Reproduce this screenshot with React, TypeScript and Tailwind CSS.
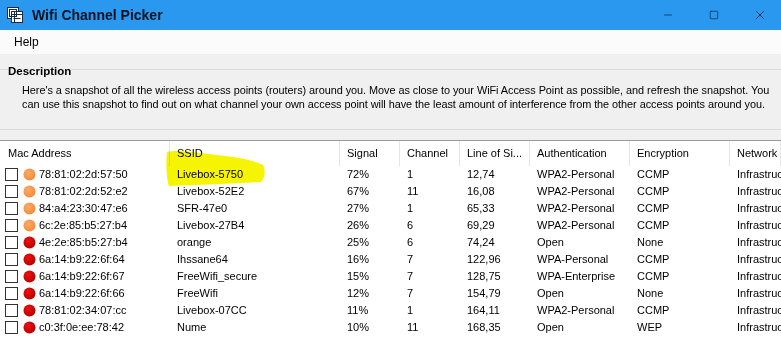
import { Minus, Square, X } from "lucide-react";

type Row = {
  mac: string;
  ssid: string;
  signal: string;
  channel: string;
  los: string;
  auth: string;
  enc: string;
  strong: boolean;
};

const rows: Row[] = [
  { mac: "78:81:02:2d:57:50", ssid: "Livebox-5750", signal: "72%", channel: "1", los: "12,74", auth: "WPA2-Personal", enc: "CCMP", strong: true },
  { mac: "78:81:02:2d:52:e2", ssid: "Livebox-52E2", signal: "67%", channel: "11", los: "16,08", auth: "WPA2-Personal", enc: "CCMP", strong: true },
  { mac: "84:a4:23:30:47:e6", ssid: "SFR-47e0", signal: "27%", channel: "1", los: "65,33", auth: "WPA2-Personal", enc: "CCMP", strong: true },
  { mac: "6c:2e:85:b5:27:b4", ssid: "Livebox-27B4", signal: "26%", channel: "6", los: "69,29", auth: "WPA2-Personal", enc: "CCMP", strong: true },
  { mac: "4e:2e:85:b5:27:b4", ssid: "orange", signal: "25%", channel: "6", los: "74,24", auth: "Open", enc: "None", strong: false },
  { mac: "6a:14:b9:22:6f:64", ssid: "Ihssane64", signal: "16%", channel: "7", los: "122,96", auth: "WPA-Personal", enc: "CCMP", strong: false },
  { mac: "6a:14:b9:22:6f:67", ssid: "FreeWifi_secure", signal: "15%", channel: "7", los: "128,75", auth: "WPA-Enterprise", enc: "CCMP", strong: false },
  { mac: "6a:14:b9:22:6f:66", ssid: "FreeWifi", signal: "12%", channel: "7", los: "154,79", auth: "Open", enc: "None", strong: false },
  { mac: "78:81:02:34:07:cc", ssid: "Livebox-07CC", signal: "11%", channel: "1", los: "164,11", auth: "WPA2-Personal", enc: "CCMP", strong: false },
  { mac: "c0:3f:0e:ee:78:42", ssid: "Nume", signal: "10%", channel: "11", los: "168,35", auth: "Open", enc: "WEP", strong: false },
];

const cols = "grid grid-cols-[170px_170px_60px_60px_70px_100px_100px_1fr]";

const Dot = ({ strong }: { strong: boolean }) => (
  <svg width="13" height="13" viewBox="0 0 13 13" className="shrink-0">
    <defs>
      <radialGradient id="dotOrange" cx="0.4" cy="0.35" r="0.7">
        <stop offset="0" stopColor="#fbab66" />
        <stop offset="1" stopColor="#f08a3a" />
      </radialGradient>
      <radialGradient id="dotRed" cx="0.4" cy="0.35" r="0.7">
        <stop offset="0" stopColor="#f01010" />
        <stop offset="1" stopColor="#b00000" />
      </radialGradient>
    </defs>
    <circle cx="6.5" cy="6.5" r="6" fill={strong ? "url(#dotOrange)" : "url(#dotRed)"} />
  </svg>
);

const AppIcon = () => (
  <svg width="16" height="16" viewBox="0 0 16 16" className="shrink-0">
    <rect x="0.5" y="0.5" width="11" height="11" fill="#fff" stroke="#1b2a44" />
    <rect x="4.5" y="4.5" width="11" height="11" fill="#fff" stroke="#1b2a44" />
    <rect x="2.5" y="2.5" width="7" height="7" fill="none" stroke="#1b2a44" />
    <line x1="4.5" y1="7.5" x2="15.5" y2="7.5" stroke="#1b2a44" />
    <line x1="7.5" y1="4.5" x2="7.5" y2="15.5" stroke="#1b2a44" />
    <line x1="6.5" y1="11.5" x2="13.5" y2="11.5" stroke="#1b2a44" />
  </svg>
);

export default function App() {
  return (
    <div className="w-[781px] h-[364px] overflow-hidden bg-[#f0f0f0] text-black font-['Liberation_Sans',Arial,sans-serif] text-[11px]">
      {/* title bar */}
      <div className="h-[30px] bg-[#2a98ee] flex items-center">
        <div className="pl-[7px] pr-[9px]">
          <AppIcon />
        </div>
        <span className="font-bold text-[14px] text-[#0b1320]">Wifi Channel Picker</span>
        <div className="ml-auto flex -mr-[2px] h-full text-[#0b1320]">
          <div className="w-[46px] flex items-center justify-center">
            <Minus size={12} strokeWidth={1.2} />
          </div>
          <div className="w-[46px] flex items-center justify-center">
            <Square size={10} strokeWidth={1.4} />
          </div>
          <div className="w-[46px] flex items-center justify-center">
            <X size={14} strokeWidth={1.2} />
          </div>
        </div>
      </div>

      {/* menu */}
      <div className="h-[24px] bg-[#fbfbfb] flex items-center px-[14px] text-[12px]">Help</div>

      {/* description group */}
      <div className="h-[86px] pt-[9px] pb-[10px]">
        <div className="relative h-full border-b border-[#dadada]">
          <div className="absolute left-0 right-0 top-[6px] border-t border-[#dadada]" />
          <span className="relative ml-[8px] bg-[#f0f0f0] font-bold text-[11.5px] leading-[14px]">Description</span>
          <p className="pl-[22px] pr-0 mt-[3px] leading-[14px] text-[10.9px] tracking-[-0.05px]">
            Here's a snapshot of all the wireless access points (routers) around you. Move as close to your WiFi Access Point as possible, and refresh the snapshot. You can use this snapshot to find out on what channel your own access point will have the least amount of interference from the other access points around you.
          </p>
        </div>
      </div>

      {/* list view */}
      <div className="relative h-[224px] bg-white border-t border-[#9a9a9a]">
        <div className={`${cols} h-[25px] items-stretch`}>
          {["Mac Address", "SSID", "Signal", "Channel", "Line of Si...", "Authentication", "Encryption", "Network Type"].map((h, i) => (
            <div
              key={h}
              className={`flex items-center whitespace-nowrap overflow-hidden border-r border-[#e5e5e5] ${i === 0 ? "pl-[8px]" : "pl-[7px]"}`}
            >
              {h}
            </div>
          ))}
        </div>

        <svg className="absolute left-[165px] top-[8px] mix-blend-multiply pointer-events-none" width="105" height="40" viewBox="0 0 105 40">
          <path
            d="M2 3 C 15 0, 40 5, 60 7 C 80 9, 92 13, 98 16 C 101 22, 100 29, 96 33 L 55 35 L 4 37 C 1 28, 1 12, 2 3 Z"
            fill="#f6f400"
          />
        </svg>

        {rows.map((r) => (
          <div key={r.mac} className={`${cols} h-[17px] items-center whitespace-nowrap`}>
            <div className="flex items-center pl-[5px]">
              <div className="w-[13px] h-[13px] border border-[#333] bg-white shrink-0" />
              <div className="ml-[5px]">
                <Dot strong={r.strong} />
              </div>
              <span className="ml-[3px]">{r.mac}</span>
            </div>
            <div className="pl-[7px] relative">{r.ssid}</div>
            <div className="pl-[7px]">{r.signal}</div>
            <div className="pl-[7px]">{r.channel}</div>
            <div className="pl-[7px]">{r.los}</div>
            <div className="pl-[7px]">{r.auth}</div>
            <div className="pl-[7px]">{r.enc}</div>
            <div className="pl-[7px] overflow-hidden">Infrastructure</div>
          </div>
        ))}
      </div>
    </div>
  );
}
